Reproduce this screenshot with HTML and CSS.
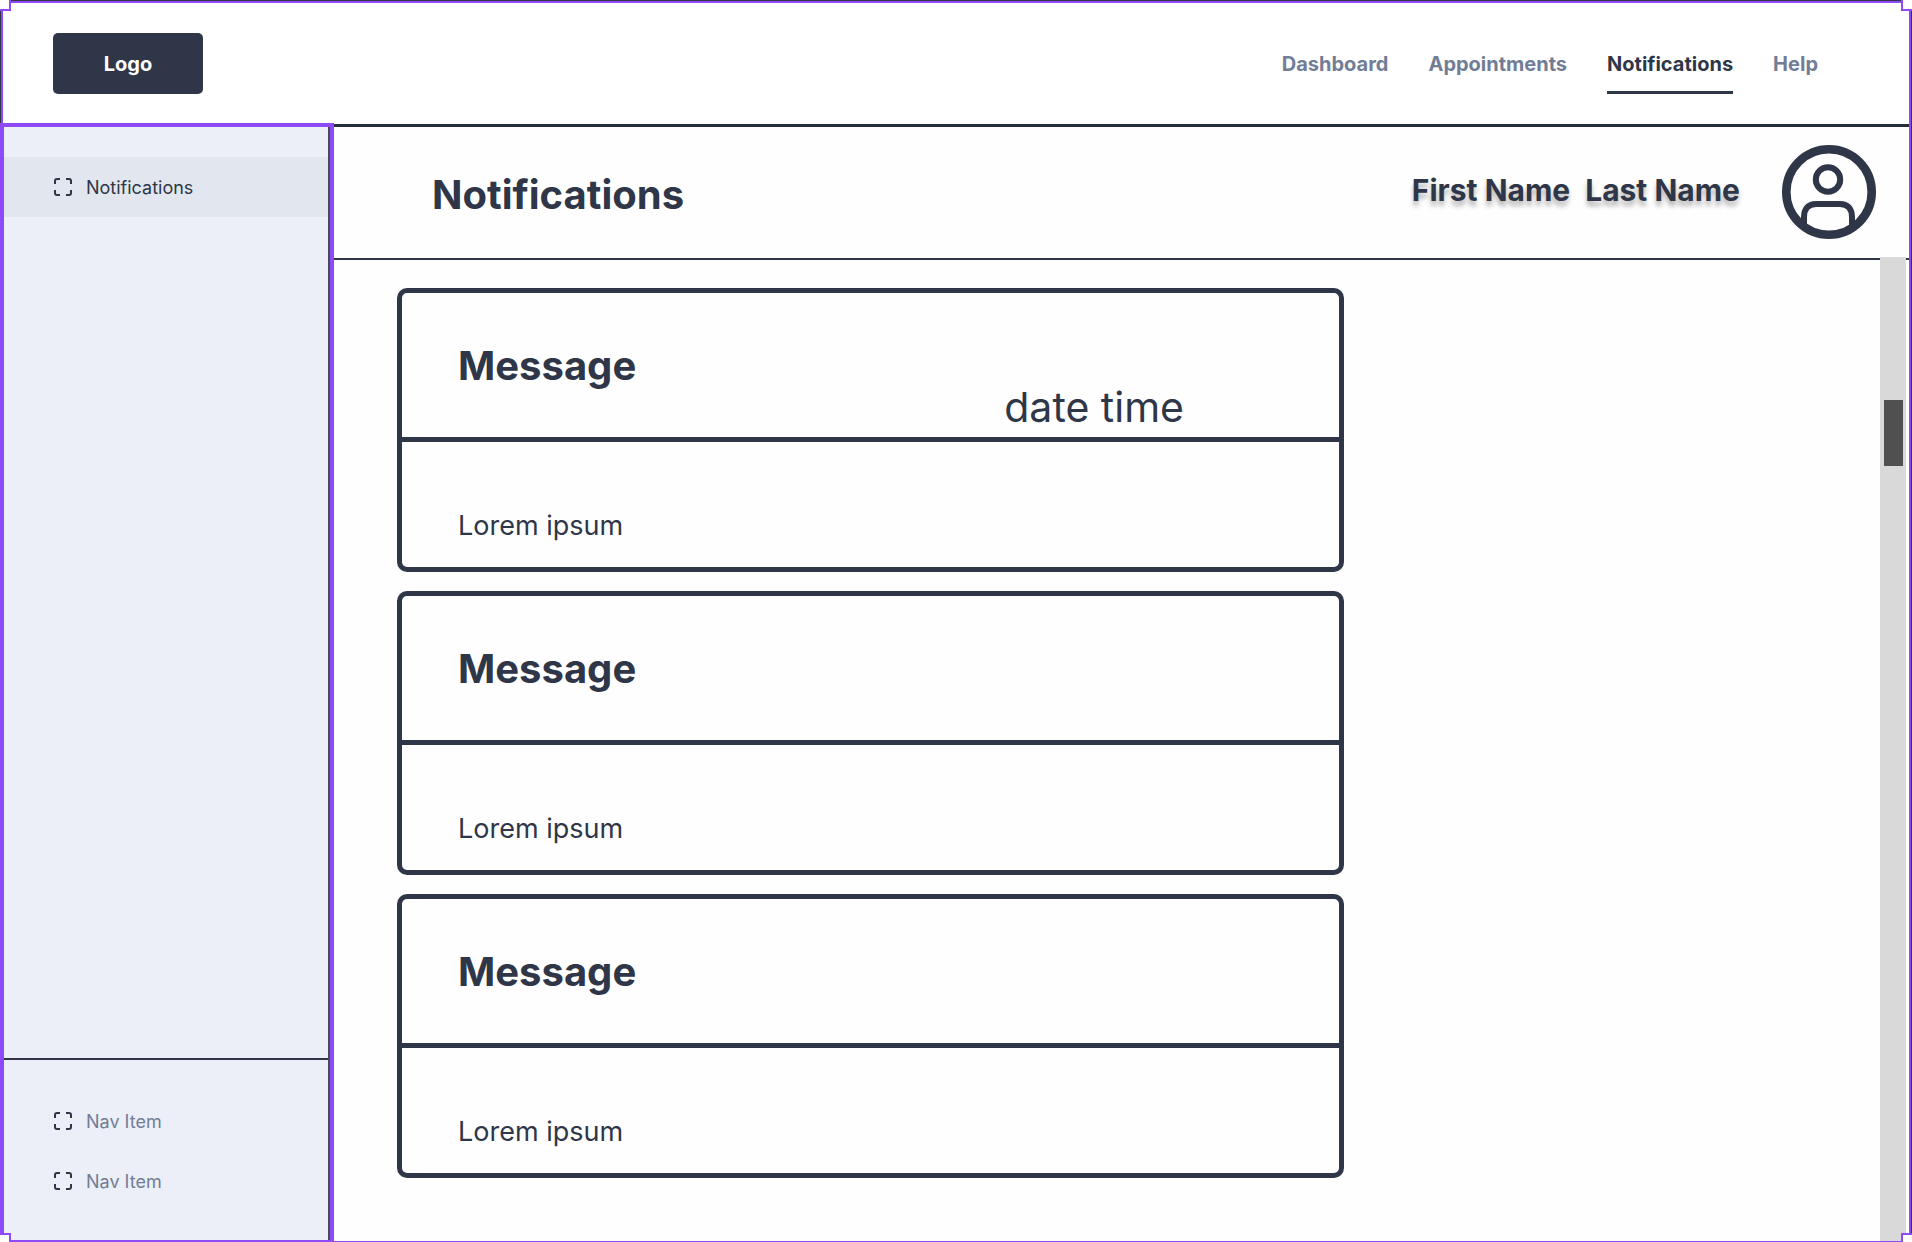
FILE: index.html
```html
<!DOCTYPE html>
<html lang="en">
<head>
<meta charset="utf-8">
<meta name="viewport" content="width=device-width, initial-scale=1">
<title>Notifications</title>
<link rel="stylesheet" href="styles.css">
</head>
<body>
<svg class="sprite" aria-hidden="true">
  <symbol id="icon-frame" viewBox="0 0 18 18">
    <path d="M6 1H3a2 2 0 0 0-2 2v3M12 1h3a2 2 0 0 1 2 2v3M17 12v3a2 2 0 0 1-2 2h-3M6 17H3a2 2 0 0 1-2-2v-3"/>
  </symbol>
</svg>
<div class="page">
  <header class="topbar">
    <a class="logo" href="#">Logo</a>
    <nav class="topnav" aria-label="Main">
      <a href="#">Dashboard</a>
      <a href="#">Appointments</a>
      <a class="active" href="#" aria-current="page">Notifications</a>
      <a href="#">Help</a>
    </nav>
  </header>

  <aside class="sidebar">
    <nav class="side-group" aria-label="Section">
      <a class="side-link selected" href="#"><svg class="icon"><use href="#icon-frame"/></svg>Notifications</a>
    </nav>
    <nav class="side-group side-bottom" aria-label="More">
      <a class="side-link" href="#"><svg class="icon"><use href="#icon-frame"/></svg>Nav Item</a>
      <a class="side-link" href="#"><svg class="icon"><use href="#icon-frame"/></svg>Nav Item</a>
    </nav>
  </aside>

  <main class="main">
    <div class="page-head">
      <h1>Notifications</h1>
      <div class="user">
        <p class="user-name"><span>First Name</span><span>Last Name</span></p>
        <svg class="avatar" viewBox="0 0 94 94" role="img" aria-label="Profile">
          <circle cx="47" cy="47" r="42.7" stroke-width="8.6"/>
          <circle cx="46" cy="34.5" r="12.2" stroke-width="6"/>
          <path d="M22 80V72C22 63 27 59 34 59H58C65 59 70 63 70 72V80" stroke-width="6"/>
        </svg>
      </div>
    </div>
    <div class="content">
      <section class="messages" aria-label="Messages">
        <article class="card">
          <header class="card-head"><h2>Message</h2><span class="date">date time</span></header>
          <p class="card-body">Lorem ipsum</p>
        </article>
        <article class="card">
          <header class="card-head"><h2>Message</h2></header>
          <p class="card-body">Lorem ipsum</p>
        </article>
        <article class="card">
          <header class="card-head"><h2>Message</h2></header>
          <p class="card-body">Lorem ipsum</p>
        </article>
      </section>
      <div class="scroll-track"><div class="scroll-thumb"></div></div>
    </div>
  </main>

  <div class="frame"></div>
  <i class="handle top-left"></i>
  <i class="handle top-right"></i>
  <i class="handle bottom-left"></i>
  <i class="handle bottom-right"></i>
</div>
</body>
</html>
```
FILE: styles.css
```css
:root {
  --ink: #2f3648;
  --muted: #717d96;
  --purple: #8e4af6;
  --paper: #fefefe;
}

* { box-sizing: border-box; }

body {
  margin: 0;
  background: var(--paper);
  color: var(--ink);
  font-family: Inter, "Liberation Sans", sans-serif;
}

h1, h2, p { margin: 0; }
a { color: inherit; text-decoration: none; }
.sprite { display: none; }

.page {
  position: relative;
  display: grid;
  grid-template-columns: 334px 1fr;
  grid-template-rows: auto 1fr;
  min-height: 100vh;
}

/* Top bar */
.topbar {
  grid-column: 1 / -1;
  display: flex;
  align-items: center;
  justify-content: space-between;
  height: 127px;
  padding: 3px 94px 0 53px;
  border-bottom: 3px solid #252c3a;
  background: #fff;
}

.logo {
  display: grid;
  place-items: center;
  width: 150px;
  height: 61px;
  border-radius: 5px;
  background: var(--ink);
  color: #fff;
  font-size: 20px;
  font-weight: 700;
}

.topnav {
  display: flex;
  gap: 40px;
  color: var(--muted);
  font-size: 20px;
  font-weight: 700;
  line-height: 53px;
}

.topnav a {
  padding-top: 5px;
  border-bottom: 3px solid transparent;
}

.topnav .active {
  border-bottom-color: var(--ink);
  color: var(--ink);
}

/* Sidebar */
.sidebar {
  z-index: 2;
  display: flex;
  flex-direction: column;
  justify-content: space-between;
  margin-top: -4px;
  border: 4px solid var(--purple);
  border-bottom-width: 2px;
  background: #eceff7;
  box-shadow: inset -2px 0 #474a5c;
}

.side-group {
  margin-right: 2px;
  padding: 30px 0 29px;
}

.side-bottom {
  padding-top: 31px;
  border-top: 2px solid var(--ink);
}

.side-link {
  display: flex;
  align-items: center;
  gap: 14px;
  height: 60px;
  padding-left: 50px;
  color: var(--muted);
  font-size: 18px;
}

.side-link.selected {
  background: #e2e7ef;
  color: var(--ink);
}

.icon {
  width: 18px;
  height: 18px;
  fill: none;
  stroke: var(--ink);
  stroke-width: 2;
}

/* Page heading */
.main {
  display: flex;
  flex-direction: column;
}

.page-head {
  display: flex;
  align-items: center;
  justify-content: space-between;
  height: 133px;
  padding: 0 36px 2px 98px;
  border-bottom: 2px solid var(--ink);
}

h1, h2 {
  font-size: 40px;
  font-weight: 700;
  line-height: 48px;
}

h1 { padding-top: 6px; }
h2 { padding-top: 2px; }

.user {
  display: flex;
  align-items: center;
  gap: 42px;
}

.user-name {
  display: flex;
  gap: 15px;
  padding-bottom: 3px;
  font-size: 30px;
  font-weight: 700;
  text-shadow: 0 5px 5px rgba(0, 0, 0, 0.3);
}

.avatar {
  width: 94px;
  height: 94px;
  fill: none;
  stroke: var(--ink);
}

/* Messages */
.content {
  flex: 1;
  display: flex;
  justify-content: space-between;
  padding: 0 6px 0 63px;
}

.messages {
  flex: 0 1 947px;
  display: flex;
  flex-direction: column;
  gap: 19px;
  padding: 28px 0;
}

.card {
  border: 5px solid var(--ink);
  border-radius: 10px;
}

.card-head {
  display: flex;
  align-items: center;
  justify-content: space-between;
  height: 149px;
  padding: 0 155px 0 56px;
  border-bottom: 5px solid var(--ink);
}

.date {
  align-self: flex-end;
  padding-bottom: 6px;
  font-size: 41px;
  font-weight: 400;
  line-height: 48px;
}

.card-body {
  padding: 66px 56px 23px;
  font-size: 27px;
  font-weight: 400;
  line-height: 36px;
}

.scroll-track {
  width: 26px;
  margin-top: -3px;
  padding: 143px 3px 0 4px;
  background: #d9d9d9;
}

.scroll-thumb {
  height: 66px;
  background: #505050;
}

/* Selection outline laid over the page */
.frame,
.handle {
  position: absolute;
  pointer-events: none;
}

.frame {
  z-index: 1;
  inset: 1px 1px 0;
  border: 2px solid var(--purple);
  border-bottom-width: 1px;
  outline: 1px solid var(--ink);
}

.handle {
  z-index: 3;
  width: 11px;
  height: 11px;
  border: 0 solid var(--purple);
  background: #fff;
}

.top-left { top: 0; left: 0; border-width: 0 2px 2px 0; }
.top-right { top: 0; right: 0; border-width: 0 0 2px 2px; }
.bottom-left { bottom: 0; left: 0; height: 9px; border-width: 2px 2px 0 0; }
.bottom-right { bottom: 0; right: 0; height: 9px; border-width: 2px 0 0 2px; }
```
